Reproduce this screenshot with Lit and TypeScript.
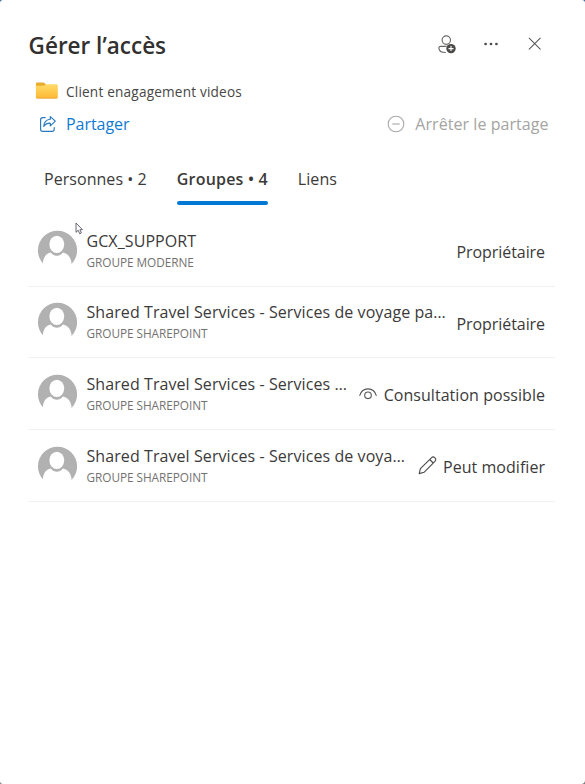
import { LitElement, html, css, type TemplateResult } from "lit";
import { customElement, property, state } from "lit/decorators.js";
import { classMap } from "lit/directives/class-map.js";

type Role = "owner" | "view" | "edit";

interface Group {
  name: string;
  kind: string;
  role: Role;
}

const GROUPS: Group[] = [
  { name: "GCX_SUPPORT", kind: "GROUPE MODERNE", role: "owner" },
  { name: "Shared Travel Services - Services de voyage pa…", kind: "GROUPE SHAREPOINT", role: "owner" },
  { name: "Shared Travel Services - Services …", kind: "GROUPE SHAREPOINT", role: "view" },
  { name: "Shared Travel Services - Services de voya…", kind: "GROUPE SHAREPOINT", role: "edit" },
];

const ROLE_LABEL: Record<Role, string> = {
  owner: "Propriétaire",
  view: "Consultation possible",
  edit: "Peut modifier",
};

const eyeIcon = html`<svg class="eye" width="18" height="12" viewBox="0 0 18 12" fill="none" stroke="#555" stroke-width="1.1" stroke-linecap="round">
  <path d="M.8 7.4C2 3.2 5.2.9 9 .9s7 2.3 8.2 6.5" /><circle cx="9" cy="7.3" r="3.3" />
</svg>`;

const pencilIcon = html`<svg class="pencil" width="19" height="19" viewBox="0 0 19 19" fill="none" stroke="#4a4a4a" stroke-width="1.1" stroke-linejoin="round">
  <path d="M1.2 17.6l1.2-4.9L13.4 1.8a2.35 2.35 0 0 1 3.5 3.5L6 16.3zM11.7 3.5l3.5 3.5" />
</svg>`;

@customElement("group-row")
export class GroupRow extends LitElement {
  @property({ attribute: false }) group!: Group;

  static styles = css`
    :host {
      display: flex;
      align-items: center;
      box-sizing: border-box;
      height: 71.8px;
      padding: 0 10px 0 9px;
      border-bottom: 1.4px solid #f1f1f1;
    }
    .avatar { flex: none; margin-right: 9.5px; }
    .text { flex: 1; min-width: 0; white-space: nowrap; margin-top: -2px; }
    .name { font-size: 16px; line-height: 24px; letter-spacing: 0.08px; color: #3b3a39; }
    .kind { font-size: 11.8px; line-height: 16px; margin-top: 1px; color: #737170; letter-spacing: -0.05px; }
    .role {
      display: flex;
      align-items: center;
      font-size: 16px;
      line-height: 24px;
      letter-spacing: 0.04px;
      color: #3b3a39;
      white-space: nowrap;
      padding-top: 2.6px;
    }
    .owner { letter-spacing: -0.07px; padding-top: 3.2px; }
    .eye { margin: 0 6.5px 3px 0; }
    .pencil { margin: 0 6px 3px 0; }
  `;

  render() {
    const { name, kind, role } = this.group;
    const icon: TemplateResult | null = role === "view" ? eyeIcon : role === "edit" ? pencilIcon : null;
    return html`
      <svg class="avatar" width="40" height="40" viewBox="0 0 40 40">
        <circle cx="20.5" cy="20.3" r="19.6" fill="#b1b1b1" />
        <path fill="#fff" d="M5.8 33.8C6.2 27.5 8.8 23.3 13.8 22.6 17 26.9 22.6 26.9 25.8 22.6 30.8 23.3 34.2 27.5 34.6 33.8L40 40H0z" />
        <ellipse cx="19.8" cy="14.3" rx="7.4" ry="8.6" fill="#fff" />
      </svg>
      <div class="text">
        <div class="name">${name}</div>
        <div class="kind">${kind}</div>
      </div>
      <div class=${classMap({ role: true, owner: role === "owner" })}>${icon}<span>${ROLE_LABEL[role]}</span></div>
    `;
  }
}

@customElement("app-root")
export class AppRoot extends LitElement {
  @state() private tab = 1;

  static styles = css`
    :host {
      display: block;
      height: 784px;
      background: linear-gradient(#2f5f94 50%, #777 50%);
      overflow: hidden;
      font-family: "Open Sans", "Noto Sans", sans-serif;
      color: #3b3a39;
    }
    .panel {
      box-sizing: border-box;
      width: 585px;
      height: 784px;
      padding: 29px 30px 0 28px;
      background: #fff;
      border-radius: 3px 3px 4px 3px;
      position: relative;
    }
    .header { display: flex; align-items: flex-start; height: 32px; }
    .title {
      flex: 1;
      margin: 0;
      font-size: 22.5px;
      line-height: 33px;
      font-weight: 600;
      color: #323130;
      white-space: nowrap;
      padding-left: 0.6px;
    }
    .tools { display: flex; align-items: center; height: 30px; padding-right: 13px; }
    .dots { margin: 0 29px 0 27px; }
    .file { display: flex; align-items: center; height: 20px; margin-top: 20px; padding-left: 7px; }
    .folder { margin: -2px 8px 0 0; }
    .file-name { font-size: 13.6px; line-height: 20px; letter-spacing: 0.2px; color: #484644; padding-top: 1px; }
    .actions {
      display: flex;
      justify-content: space-between;
      height: 24px;
      margin-top: 11px;
      padding: 0 6.5px 0 11px;
      font-size: 16px;
      line-height: 24px;
      white-space: nowrap;
    }
    .action { display: flex; align-items: center; }
    .share { color: #0f7bd3; letter-spacing: -0.05px; }
    .share svg { margin-right: 9px; }
    .stop { color: #a5a4a2; letter-spacing: 0.05px; }
    .stop svg { margin-right: 10px; }
    .tabs { display: flex; gap: 30px; margin-top: 31px; padding-left: 16px; }
    .tab {
      display: flex;
      flex-direction: column;
      justify-content: space-between;
      height: 35px;
      font-size: 16px;
      line-height: 24px;
      letter-spacing: 0.05px;
      white-space: nowrap;
    }
    .tab::after { content: ""; height: 3.6px; margin-bottom: -3px; border-radius: 2px; }
    .active { font-weight: 600; letter-spacing: 0.2px; }
    .active::after { background: #0078d4; }
    .list { margin-top: 12.8px; width: 527px; }
    .cursor { position: absolute; left: 75px; top: 222px; }
  `;

  render() {
    const tabs = ["Personnes • 2", "Groupes • 4", "Liens"];
    return html`
      <div class="panel">
        <div class="header">
          <h1 class="title">Gérer l’accès</h1>
          <div class="tools">
            <svg width="18" height="19" viewBox="0 0 18 19" fill="none" stroke="#6a6967" stroke-width="1.15">
              <circle cx="8.3" cy="5.1" r="4.2" />
              <path d="M8.5 11.3H2.4C1.4 11.3 .9 12 .9 12.9c0 2.9 2.8 4.6 6.9 4.6" />
              <circle cx="13" cy="13.6" r="4.7" fill="#4b4a48" stroke="none" />
              <path d="M13 11.1v5M10.5 13.6h5" stroke="#fff" stroke-width="1.1" />
            </svg>
            <svg class="dots" width="16" height="4" viewBox="0 0 16 4" fill="#4b4a48">
              <circle cx="2.6" cy="2" r="1.35" /><circle cx="8" cy="2" r="1.35" /><circle cx="13.4" cy="2" r="1.35" />
            </svg>
            <svg width="14" height="14" viewBox="0 0 14 14" stroke="#5a5957" stroke-width="1.05" stroke-linecap="round">
              <path d="M1.2 1.2l11 11M12.2 1.2l-11 11" />
            </svg>
          </div>
        </div>
        <div class="file">
          <svg class="folder" width="23" height="17" viewBox="0 0 23 17">
            <defs>
              <linearGradient id="g" x1="0" y1="0" x2="0" y2="1">
                <stop offset="0" stop-color="#ffda68" /><stop offset="1" stop-color="#fdb935" />
              </linearGradient>
            </defs>
            <path d="M.9 2Q.9.6 2.3.6h6.2q.7 0 1.2.6L10.9 2.4V6H.9z" fill="#e9ac2e" />
            <path d="M.9 3.8h7.4q.7 0 1.2-.5l.9-.6q.5-.4 1.2-.4h9.8q1.4 0 1.4 1.4v11.2q0 1.4-1.4 1.4H2.3q-1.4 0-1.4-1.4z" fill="url(#g)" />
            <path d="M1.2 15.6q.3.7 1.1.7h19.1q.8 0 1.1-.7" fill="none" stroke="#e79c2b" stroke-width=".7" />
          </svg>
          <span class="file-name">Client enagagement videos</span>
        </div>
        <div class="actions">
          <div class="action share">
            <svg width="18" height="18" viewBox="0 0 18 18" fill="none" stroke="#2878be" stroke-width="1.15" stroke-linejoin="round" stroke-linecap="round">
              <path d="M6.2 2.6H3.7Q1.6 2.6 1.6 4.7v9.6q0 2.1 2.1 2.1h9.4q2.1 0 2.1-2.1v-1.7" />
              <path d="M11.3 1.6l5 4.6-5 4.6V8.2C8.3 8.1 6.3 9.1 4.7 11.4 5 7.2 7.3 4.5 11.3 4.2z" />
            </svg>
            <span>Partager</span>
          </div>
          <div class="action stop">
            <svg width="18" height="18" viewBox="0 0 18 18" fill="none" stroke="#a9a8a6" stroke-width="1.1">
              <circle cx="9" cy="9" r="7.8" /><path d="M5.2 9h7.6" />
            </svg>
            <span>Arrêter le partage</span>
          </div>
        </div>
        <div class="tabs">
          ${tabs.map(
            (t, i) => html`<div class=${classMap({ tab: true, active: i === this.tab })} @click=${() => (this.tab = i)}>${t}</div>`
          )}
        </div>
        <div class="list">${GROUPS.map((g) => html`<group-row .group=${g}></group-row>`)}</div>
        <svg class="cursor" width="9" height="14" viewBox="0 0 9 14">
          <path d="M1 1v9.3l2.2-2 1.5 3.5 1.7-.8-1.5-3.3h2.6z" fill="#fff" stroke="#555463" stroke-width=".9" stroke-linejoin="round" />
        </svg>
      </div>
    `;
  }
}
